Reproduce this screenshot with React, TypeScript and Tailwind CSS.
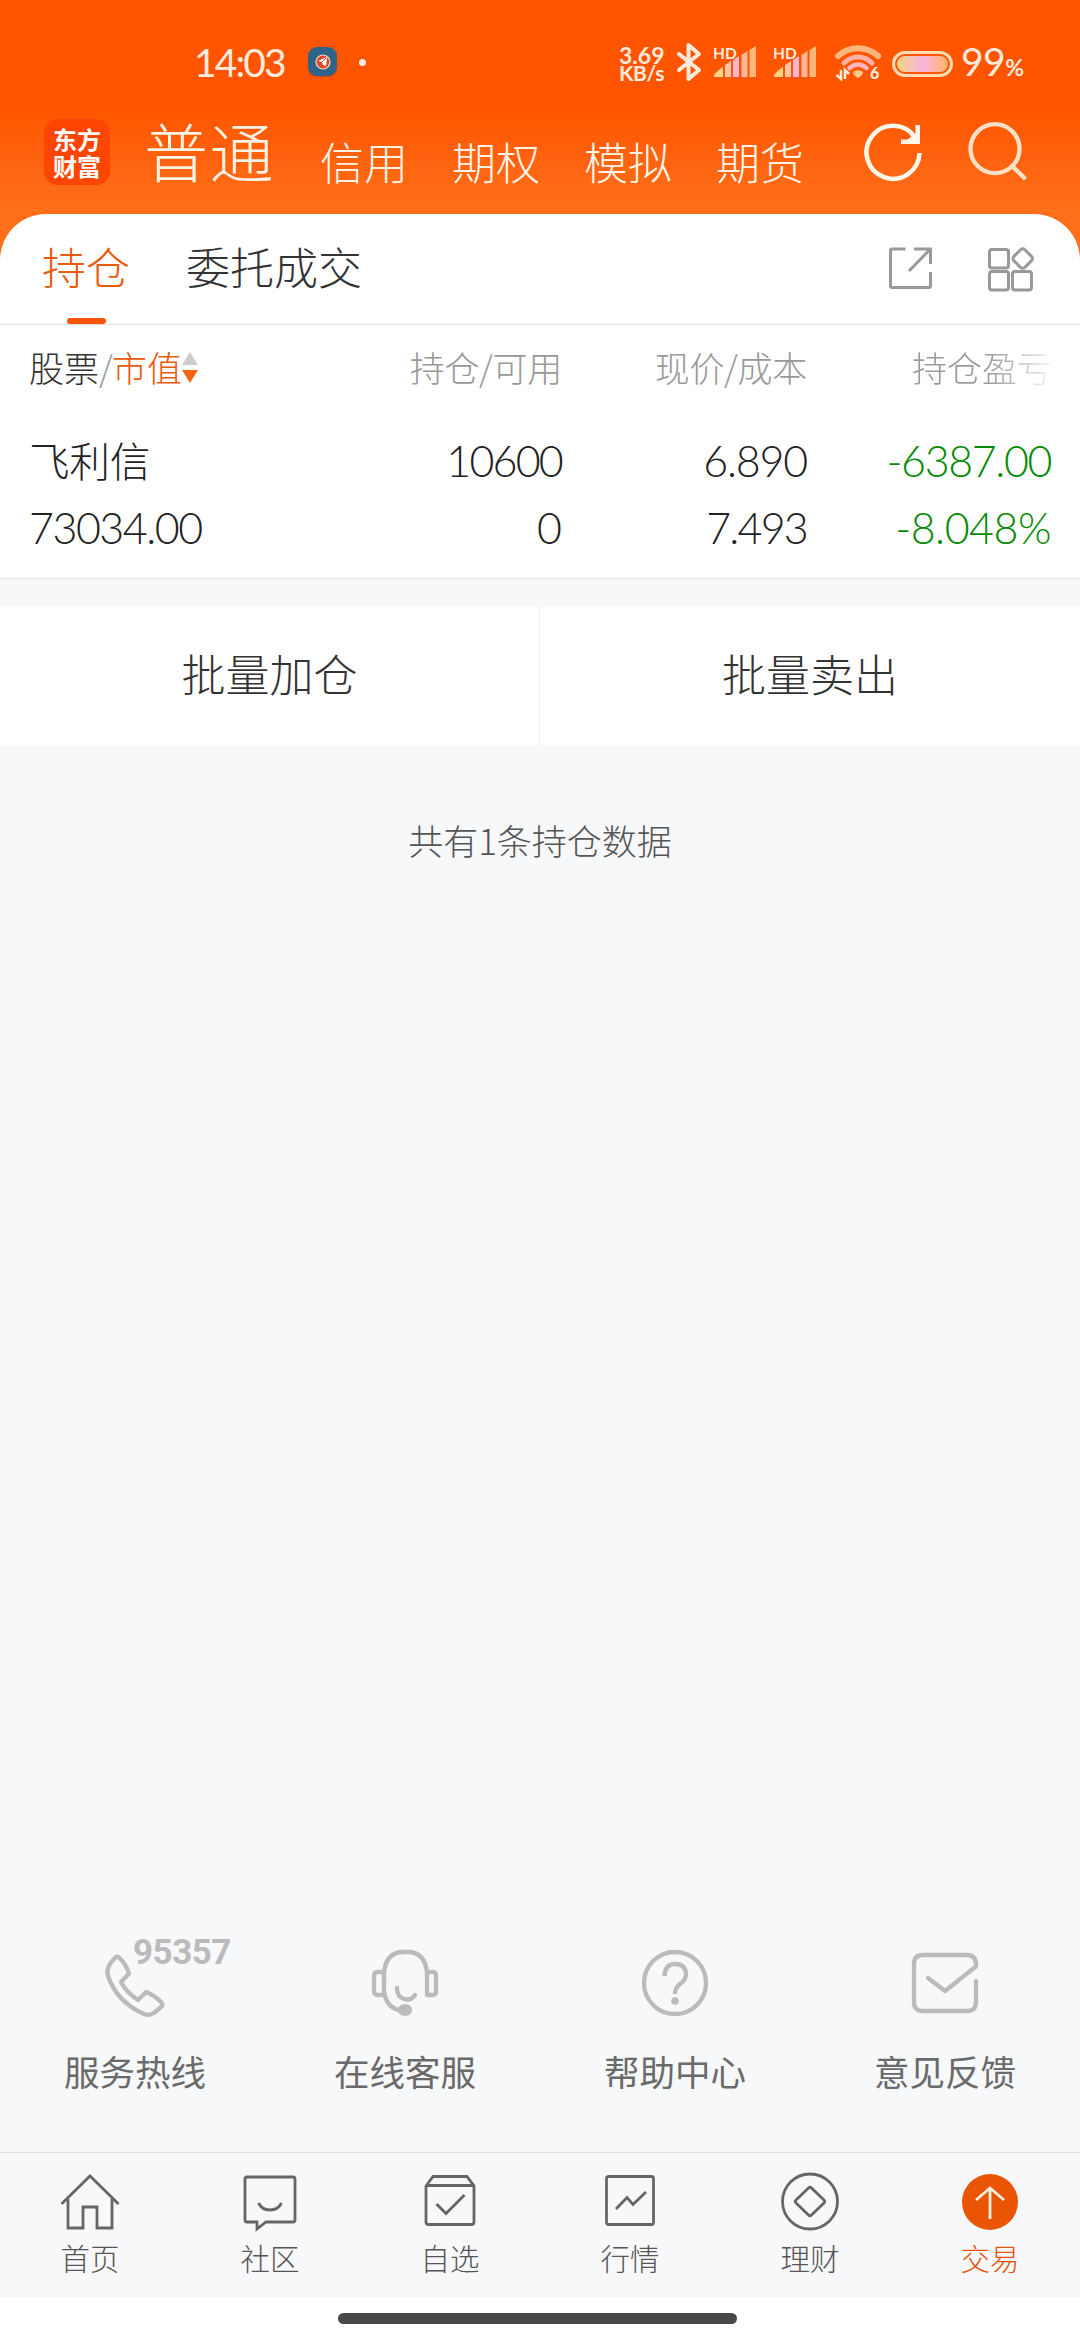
import React from "react";

const cjk = "font-['Noto_Sans_CJK_SC',sans-serif]";
const num = "font-['Lato',sans-serif]";

function Signal() {
  return (
    <svg width="44" height="36" viewBox="0 0 44 36" className="shrink-0 overflow-visible">
      <path d="M1 33v-2c3-4 6-6 9-8v10z" fill="#ffd28a" />
      <path d="M12 33V21l6-4v16z" fill="#ffc3a6" />
      <path d="M20 33V16l6-4v21z" fill="#ffb3d1" />
      <path d="M28.500 33V11l6-4v26z" fill="#ffb59a" />
      <path d="M36.500 33V6l6.500-4v31z" fill="#ffb779" />
      <text x="0" y="14.500" fontSize="15.500" fontWeight="700" fill="#ffe9d8" className="font-['Lato',sans-serif]">HD</text>
    </svg>
  );
}

function StatusBar() {
  return (
    <div className="flex h-[124px] items-center text-[#ffeadb]">
      <span className={`${num} ml-[194px] w-[113px] whitespace-nowrap text-[39px] leading-[40px] tracking-[-1.900px]`}>14:03</span>
      <svg width="32" height="32" viewBox="0 0 32 32" className="shrink-0">
        <rect x="1" y="2" width="29" height="29" rx="9" fill="#8c3a14" opacity=".5" />
        <rect x="1" y="1" width="29" height="29" rx="9" fill="#2f6488" />
        <circle cx="16" cy="16" r="7" fill="#e04a28" stroke="#f6dccb" strokeWidth="1.200" />
        <path d="M11 15l9-4-1 9-3-1-1-3z" fill="#fff" />
        <path d="M15 16l4-4" stroke="#e04a28" strokeWidth="1" />
      </svg>
      <span className="ml-[20px] size-[7px] shrink-0 rounded-full bg-[#ffeadb]" />
      <div className={`${num} ml-[253px] flex w-[57px] shrink-0 flex-col whitespace-nowrap pt-[3px] font-bold`}>
        <span className="text-[23px] leading-[18px]">3.69</span>
        <span className="text-[21px] leading-[18px] tracking-[-0.3px]">KB/s</span>
      </div>
      <svg width="26" height="40" viewBox="0 0 26 40" fill="none" stroke="#ffeadb" strokeWidth="4" className="shrink-0" strokeLinejoin="round" strokeLinecap="round">
        <path d="M3 12L23 28L12.500 37V3L23 12L3 28" />
      </svg>
      <div className="ml-[11px] flex shrink-0 gap-[16px]">
        <Signal />
        <Signal />
      </div>
      <svg width="46" height="38" viewBox="0 0 46 38" fill="none" className="ml-[18px] mt-[2px] shrink-0">
        <path d="M3 12C14 1.500 32 1.500 43 12" stroke="#ffb67c" strokeWidth="6" strokeLinecap="round" />
        <path d="M9 19C17 11 29 11 37 19" stroke="#ffb1a5" strokeWidth="5" strokeLinecap="round" />
        <path d="M14.500 24C20 19.500 26 19.500 31.500 24" stroke="#ffb6bd" strokeWidth="4.500" strokeLinecap="round" />
        <path d="M18 28q5-3.500 10 0q.500 3-5 6q-5.500-3-5-6z" fill="#ffc98a" />
        <path d="M6 26v9l-4.500-4M10 35v-9l4 4" stroke="#ffeadb" strokeWidth="2.500" />
        <text x="35" y="35" fontSize="16" fontWeight="900" fill="#ffeadb" className="font-['Lato',sans-serif]">6</text>
      </svg>
      <div className="ml-[11px] mt-[3px] h-[26px] w-[61px] shrink-0 rounded-full border-[3px] border-[#ffdcb4] p-[2px]">
        <div className="h-full rounded-full bg-linear-to-r from-[#f8d27c] via-[#f9b4dc] to-[#ffb25e]" />
      </div>
      <span className={`${num} ml-[8px] mt-[3px] whitespace-nowrap text-[39px] leading-[40px] tracking-[-0.500px]`}>
        99<span className="text-[23px] font-bold">%</span>
      </span>
    </div>
  );
}

function Header() {
  return (
    <div className="flex h-[90px] items-start text-[#fff3e6]">
      <div className={`${cjk} ml-[44px] mt-[-5px] flex size-[66px] shrink-0 flex-col items-center justify-center rounded-[14px] bg-[#ff4502] text-[24px] font-bold leading-[27px] text-white`}>
        <span>东方</span>
        <span>财富</span>
      </div>
      <span className={`${cjk} ml-[34px] mt-[-8px] shrink-0 whitespace-nowrap text-[64px] font-light leading-[66px] tracking-[1.500px]`}>普通</span>
      <div className={`${cjk} ml-[45px] mt-[14px] flex shrink-0 gap-[44px] whitespace-nowrap text-[44px] font-light leading-[46px]`}>
        <span>信用</span>
        <span>期权</span>
        <span>模拟</span>
        <span>期货</span>
      </div>
      <svg width="64" height="64" viewBox="0 0 64 64" fill="none" stroke="#fff6ea" strokeWidth="4.500" className="ml-[57px] mt-[-4px] shrink-0">
        <path d="M58.500 33A26.500 26.500 0 1 1 54 17.500" />
        <path d="M56.700 5V21.700H40" />
        <path d="M46 20L55 13V21z" fill="#fff6ea" stroke="none" />
      </svg>
      <svg width="64" height="64" viewBox="0 0 64 64" fill="none" stroke="#ffdfc6" strokeWidth="4.300" className="ml-[40px] mt-[-4px] shrink-0">
        <circle cx="30" cy="28.700" r="24.500" />
        <path d="M47 46L60.500 59" />
      </svg>
    </div>
  );
}

function Tabs() {
  return (
    <div className="flex h-[111px] border-b border-[#dfdfe1] text-[#333]">
      <div className={`${cjk} ml-[41px] flex w-[90px] flex-col items-center whitespace-nowrap pt-[29px] text-[44px] font-light leading-[46px] text-[#e85a0c]`}>
        <span>持仓</span>
        <span className="mt-[29px] h-[6px] w-[39px] rounded-full bg-[#f9540a]" />
      </div>
      <span className={`${cjk} ml-[55px] pt-[29px] text-[44px] font-light leading-[46px]`}>委托成交</span>
      <svg width="46" height="46" viewBox="0 0 46 46" fill="none" stroke="#999" strokeWidth="3" className="ml-auto mt-[32px]">
        <path d="M18.500 3H5Q3.500 3 3.500 4.500V40Q3.500 41.500 5 41.500H42Q43.500 41.500 43.500 40V26" />
        <path d="M27 3H43.500V18M43 3.500L22 25" />
      </svg>
      <svg width="48" height="48" viewBox="0 0 48 48" fill="none" stroke="#999" strokeWidth="3" className="ml-[53px] mr-[46px] mt-[32px]">
        <rect x="3.500" y="3.500" width="19" height="18.500" rx="2.500" />
        <rect x="3.500" y="25.500" width="19" height="18.500" rx="2.500" />
        <rect x="26.500" y="25.500" width="19" height="18.500" rx="2.500" />
        <rect x="29" y="4.800" width="15.500" height="15.500" rx="3" transform="rotate(45 36.750 12.500)" />
      </svg>
    </div>
  );
}

function Holdings() {
  return (
    <div className="h-[254px] border-b border-[#e8e9ec] bg-white">
      <div className={`${cjk} flex h-[84px] items-center whitespace-nowrap text-[35px] font-light leading-[40px] text-[#999]`}>
        <div className="ml-[29px] flex w-[233px] items-center">
          <span className="text-[#333]">股票</span>
          <span className="w-[13px]">/</span>
          <span className="text-[#e85a0c]">市值</span>
          <svg width="16" height="32" viewBox="0 0 16 32" className="mt-[2px]">
            <path d="M8 0L16 13H0z" fill="#ccc" />
            <path d="M8 31L16 18H0z" fill="#f96314" />
          </svg>
        </div>
        <span className="w-[300px] text-right tracking-[-0.3px]">持仓/可用</span>
        <span className="w-[245px] text-right tracking-[-0.3px]">现价/成本</span>
        <span className="ml-auto mr-[28px] bg-linear-to-r from-[#999] from-55% to-[#99999918] bg-clip-text text-transparent">持仓盈亏</span>
      </div>
      <div className={`${num} grid grid-cols-[233px_300px_245px_244px] gap-y-[17px] whitespace-nowrap pl-[29px] pt-[27px] text-right text-[43px] font-light leading-[50px] text-[#222]`}>
        <span className={`${cjk} mt-[-1px] text-left text-[40.500px]`}>飞利信</span>
        <span className="tracking-[-1.800px]">10600</span>
        <span className="tracking-[-1.200px]">6.890</span>
        <span className="tracking-[-1.400px] text-[#068a06]">-6387.00</span>
        <span className="text-left tracking-[-1.500px]">73034.00</span>
        <span>0</span>
        <span className="tracking-[-1.800px]">7.493</span>
        <span className="tracking-[-0.500px] text-[#068a06]">-8.048%</span>
      </div>
    </div>
  );
}

function BulkActions() {
  return (
    <div className={`${cjk} mt-[28px] grid h-[138px] grid-cols-2 bg-white text-center text-[44px] font-light leading-[132px] text-[#333]`}>
      <span className="border-r border-[#eceef0]">批量加仓</span>
      <span>批量卖出</span>
    </div>
  );
}

const services: { label: string; icon: React.ReactNode }[] = [
  {
    label: "服务热线",
    icon: (
      <>
        <path d="M17 8Q6 18 9 27Q18 53 45 65Q50 67 55 64L62 58Q65 56 62 53Q55 46 47 43L39 51Q27 43 22 33L30 24.500Q27 15 20 8.500Q18.500 7 17 8z" />
      </>
    ),
  },
  {
    label: "在线客服",
    icon: (
      <>
        <path d="M15 34V24Q17 3 34 3H39Q56 3 58 24V46H64Q67 46 67 43V27Q67 23 64 23H58" />
        <path d="M15 23H9Q5 23 5 27V42Q5 46 9 46H15M15 23V42Q17 60 34 62" />
        <path d="M28 39Q28 48 35 50Q42 52 46 46" strokeLinecap="round" />
        <rect x="31" y="57.500" width="10" height="7" rx="3.500" fill="#bbb" />
      </>
    ),
  },
  {
    label: "帮助中心",
    icon: (
      <>
        <circle cx="36" cy="34" r="31" />
        <path d="M25.500 27Q26 15 36 15Q46.500 15 47 25Q47 31 41 35Q36 39 36 45" />
        <circle cx="36" cy="52" r="3.800" fill="#bbb" stroke="none" />
      </>
    ),
  },
  {
    label: "意见反馈",
    icon: (
      <>
        <path d="M67 32V53Q67 62 58 62H14Q5 62 5 53V15Q5 6 14 6H58Q67 6 67 16Q67 18 65 19L36 42L19 29" strokeLinecap="round" />
      </>
    ),
  },
];

function Services() {
  return (
    <div className={`${cjk} grid grid-cols-4 text-center text-[35.500px] leading-[40px] text-[#6a6a6a]`}>
      {services.map((s, i) => (
        <div key={s.label} className="relative flex flex-col items-center">
          <svg width="72" height="72" viewBox="0 0 72 72" fill="none" stroke="#bbb" strokeWidth="4.300" strokeLinejoin="round">
            {s.icon}
          </svg>
          {i === 0 && (
            <span className="absolute left-[133px] top-[-16px] font-['Roboto',sans-serif] text-[35px] font-bold leading-[40px] tracking-[-0.500px] text-[#bbb]">95357</span>
          )}
          <span className="mt-[30px] font-normal">{s.label}</span>
        </div>
      ))}
    </div>
  );
}

const navItems: { label: string; icon: React.ReactNode; active?: boolean }[] = [
  {
    label: "首页",
    icon: <path d="M1.500 34L30 6L58.500 34M8 29V58H23V37H37V58H52V29" />,
  },
  {
    label: "社区",
    icon: (
      <>
        <path d="M7 7H53Q55 7 55 9V50Q55 52 53 52H26L17 59V52H7Q5 52 5 50V9Q5 7 7 7z" />
        <path d="M18.500 33Q22 40 30 40Q38 40 41.500 33" />
      </>
    ),
  },
  {
    label: "自选",
    icon: (
      <>
        <path d="M6 16L13 6.500H47L54 16V52Q54 54.500 51.500 54.500H8.500Q6 54.500 6 52zM6 15.500H54" />
        <path d="M16.500 34L26 43.500L44.500 25" />
      </>
    ),
  },
  {
    label: "行情",
    icon: (
      <>
        <rect x="6.500" y="6.500" width="47" height="48" rx="2" />
        <path d="M16 39L27 27.500L33 34.500L46 22" />
      </>
    ),
  },
  {
    label: "理财",
    icon: (
      <>
        <circle cx="30" cy="31.500" r="27.500" />
        <path d="M28.500 18Q30 16.500 31.500 18L44 30Q45.500 31.500 44 33L31.500 45Q30 46.500 28.500 45L16 33Q14.500 31.500 16 30z" />
      </>
    ),
  },
  {
    label: "交易",
    active: true,
    icon: (
      <>
        <circle cx="30" cy="32" r="28" fill="#ea5504" stroke="none" />
        <path d="M30 49V18M16 30L30 18L44 30" stroke="#ffefdf" />
      </>
    ),
  },
];

function BottomNav() {
  return (
    <div className={`${cjk} grid h-[145px] grid-cols-6 border-t border-[#e2e3e6] bg-[#f8f8fa] text-[29.500px] font-light leading-[32px] text-[#555]`}>
      {navItems.map((n) => (
        <div key={n.label} className={n.active ? "flex flex-col items-center pt-[17px] text-[#e2560c]" : "flex flex-col items-center pt-[17px]"}>
          <svg width="60" height="62" viewBox="0 0 60 62" fill="none" stroke="#666" strokeWidth="2.800">
            {n.icon}
          </svg>
          <span className="mt-[9px]">{n.label}</span>
        </div>
      ))}
    </div>
  );
}

export default function App() {
  return (
    <div className="flex h-[2340px] w-[1080px] flex-col overflow-hidden bg-[#f7f8fa]">
      <div className="h-[262px] shrink-0 bg-linear-to-b from-[#ff5500] from-[108px] to-[#ff6e18] to-[205px]">
        <StatusBar />
        <Header />
      </div>
      <div className="mt-[-48px] shrink-0 rounded-t-[46px] bg-white">
        <Tabs />
        <Holdings />
      </div>
      <BulkActions />
      <p className={`${cjk} mt-[75px] text-center text-[35px] font-light leading-[40px] text-[#555]`}>共有1条持仓数据</p>
      <div className="mt-auto">
        <Services />
      </div>
      <div className="mt-[61px] shrink-0">
        <BottomNav />
        <div className="flex h-[43px] justify-center bg-white pt-[16px]">
          <div className="mr-[6px] h-[11px] w-[399px] rounded-full bg-[#484848]" />
        </div>
      </div>
    </div>
  );
}
